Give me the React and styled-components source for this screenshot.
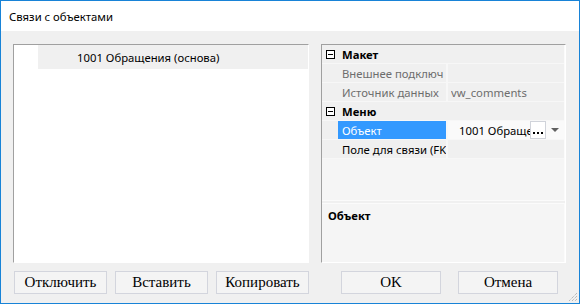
import styled, { createGlobalStyle } from "styled-components";

const Global = createGlobalStyle`
  html, body { margin:0; padding:0; background:#fff; }
  body { width:580px; height:304px; overflow:hidden; }
`

const Window = styled.div`
  position:relative;
  box-sizing:border-box;
  width:580px;
  height:304px;
  border:1px solid #1883d7;
  display:flex;
  flex-direction:column;
  background:#f0f0f0;
  font-family:"Noto Sans", "Liberation Sans", sans-serif;
  font-size:11.3px;
  color:#000;
`
const TitleBar = styled.div`
  height:30px;
  flex-shrink:0;
  background:#fff;
  display:flex;
  align-items:center;
  padding-left:8px;
`
const Body = styled.div`
  flex:1;
  display:grid;
  grid-template-columns:296px 245px;
  grid-template-rows:219px 23px;
  column-gap:12px;
  row-gap:8px;
  padding:13px 12px 0 12px;
`
const Sunken = styled.div`
  box-sizing:border-box;
  border:1px solid;
  border-color:#a0a0a0 #fff #fff #a0a0a0;
  background:${p => p.$bg || "#fff"};
  display:flex;
  flex-direction:column;
  overflow:hidden;
`
const TreeRow = styled.div`
  height:24px;
  margin-left:24px;
  background:#f0f0f0;
  display:flex;
  align-items:center;
  padding-left:39px;
`
const GridView = styled.div`
  height:155px;
  background:#f5f5f5;
  border-right:1px solid #fbfbfb;
  border-bottom:1px solid #fbfbfb;
  display:flex;
  flex-direction:column;
`
const Row = styled.div`
  height:18px;
  border-bottom:1px solid #f7f7f7;
  display:flex;
  align-items:stretch;
  background:#f0f0f0;
`
const Gutter = styled.div`
  width:15px;
  flex-shrink:0;
  display:flex;
  align-items:center;
  justify-content:center;
  padding-left:1px;
`
const CatName = styled.div`
  display:flex;
  align-items:center;
  padding-left:4px;
  font-weight:bold;
`
const Name = styled.div`
  width:104px;
  flex-shrink:0;
  padding-left:4px;
  border-right:2px solid #f7f7f7;
  display:flex;
  align-items:center;
  white-space:nowrap;
  overflow:hidden;
  color:${p => (p.$selected ? "#fff" : p.$muted ? "#6d6d6d" : "#000")};
  background:${p => (p.$selected ? "#3399ff" : "#f0f0f0")};
`
const Value = styled.div`
  flex:1;
  min-width:0;
  display:flex;
  align-items:center;
  padding-left:${p => (p.$editor ? "11px" : "3px")};
  white-space:nowrap;
  overflow:hidden;
  color:${p => (p.$muted ? "#6d6d6d" : "#000")};
  background:${p => (p.$editor ? "#fafafa" : "#f0f0f0")};
`
const ValueText = styled.span`
  flex:1;
  min-width:0;
  overflow:hidden;
  white-space:nowrap;
`
const Ellipsis = styled.div`
  box-sizing:border-box;
  width:16px;
  height:18px;
  flex-shrink:0;
  border:1px solid #d0d3da;
  background:#fff;
  display:flex;
  align-items:flex-end;
  justify-content:center;
  gap:2px;
  padding-bottom:4px;
`
const Dot = styled.span`
  width:2px;
  height:2px;
  background:#000;
`
const Arrow = styled.div`
  width:18px;
  flex-shrink:0;
  display:flex;
  align-items:center;
  justify-content:center;
`
const Splitter = styled.div`
  height:2px;
  background:#f0f0f0;
`
const Desc = styled.div`
  flex:1;
  background:#f5f5f5;
  border-top:1px solid #fbfbfb;
  border-right:1px solid #fbfbfb;
  padding:4px 6px;
  font-weight:bold;
`
const ButtonGroup = styled.div`
  display:flex;
  gap:${p => p.$gap}px;
  padding-left:${p => p.$left}px;
`
const Button = styled.button`
  box-sizing:border-box;
  width:${p => p.$w}px;
  height:23px;
  margin:0;
  padding:0;
  background:#f4f4f4;
  border:1px solid #d3d5dd;
  font-family:"Liberation Serif", serif;
  font-size:15px;
  color:#000;
`
const Grip = styled.svg`
  position:absolute;
  right:1px;
  bottom:1px;
`

function Minus() {
  return (
    <svg width="9" height="9" viewBox="0 0 9 9">
      <rect x="0.5" y="0.5" width="8" height="8" fill="#fff" stroke="#000" />
      <line x1="2" y1="4.5" x2="7" y2="4.5" stroke="#000" />
    </svg>
  )
}

function Category({ title }) {
  return (
    <Row>
      <Gutter><Minus /></Gutter>
      <CatName>{title}</CatName>
    </Row>
  )
}

function Prop({ name, value, muted, selected, editor }) {
  return (
    <Row>
      <Gutter />
      <Name $muted={muted} $selected={selected}>{name}</Name>
      <Value $muted={muted} $editor={editor}>
        <ValueText>{value}</ValueText>
        {editor && <Ellipsis><Dot /><Dot /><Dot /></Ellipsis>}
        {editor && (
          <Arrow>
            <svg width="8" height="4" viewBox="0 0 8 4"><path d="M0 0 L8 0 L4 4 Z" fill="#606060" /></svg>
          </Arrow>
        )}
      </Value>
    </Row>
  )
}

export default function App() {
  return (
    <Window>
      <Global />
      <TitleBar>Связи с объектами</TitleBar>
      <Body>
        <Sunken>
          <TreeRow>1001 Обращения (основа)</TreeRow>
        </Sunken>
        <Sunken $bg="#f0f0f0">
          <GridView>
            <Category title="Макет" />
            <Prop name="Внешнее подключ" value="" muted />
            <Prop name="Источник данных" value="vw_comments" muted />
            <Category title="Меню" />
            <Prop name="Объект" value="1001 Обращения (основа)" selected editor />
            <Prop name="Поле для связи (FK)" value="" />
          </GridView>
          <Splitter />
          <Desc>Объект</Desc>
        </Sunken>
        <ButtonGroup $gap={8} $left={1}>
          <Button $w={93}>Отключить</Button>
          <Button $w={93}>Вставить</Button>
          <Button $w={93}>Копировать</Button>
        </ButtonGroup>
        <ButtonGroup $gap={17} $left={20}>
          <Button $w={100}>OK</Button>
          <Button $w={100}>Отмена</Button>
        </ButtonGroup>
      </Body>
      <Grip width="11" height="11" viewBox="0 0 11 11">
        <path d="M10 2 L2 10 M10 5 L5 10 M10 8 L8 10" stroke="#a0a0a0" strokeWidth="1" strokeDasharray="1 1" />
      </Grip>
    </Window>
  )
}
